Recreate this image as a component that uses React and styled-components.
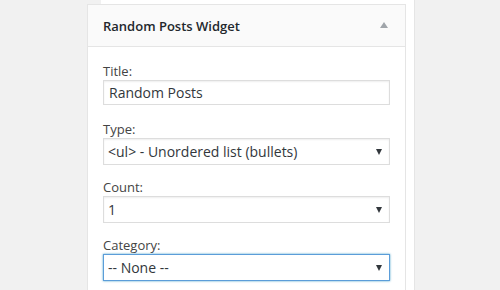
import styled, { createGlobalStyle } from "styled-components";

const GlobalStyle = createGlobalStyle`
  html, body {
    margin: 0;
    padding: 0;
    background: #f1f1f1;
    font-family: "Open Sans", "Liberation Sans", sans-serif;
    color: #444;
    overflow: hidden;
  }
`;

const fields = [
  { label: "Title:", kind: "input", value: "Random Posts" },
  { label: "Type:", kind: "select", value: "<ul> - Unordered list (bullets)" },
  { label: "Count:", kind: "select", value: "1" },
  { label: "Category:", kind: "select", value: "-- None --", focused: true },
];

function App() {
  return (
    <>
      <GlobalStyle />
      <StyledPage>
        <Sidebar>
          <Widget>
            <WidgetTop>
              <WidgetTitle>Random Posts Widget</WidgetTitle>
              <Toggle />
            </WidgetTop>
            <WidgetInside>
              {fields.map((f) => (
                <Field key={f.label} $spaced={f.kind === "input"}>
                  <Label>{f.label}</Label>
                  {f.kind === "input" ? (
                    <TextInput type="text" defaultValue={f.value} />
                  ) : (
                    <SelectWrap>
                      <Select defaultValue={f.value} $focused={f.focused}>
                        <option>{f.value}</option>
                      </Select>
                      <Arrow />
                    </SelectWrap>
                  )}
                </Field>
              ))}
            </WidgetInside>
          </Widget>
        </Sidebar>
      </StyledPage>
    </>
  );
}

const StyledPage = styled.div`
  height: 290px;
  width: 500px;
  display: flex;
  overflow: hidden;
`;

const Sidebar = styled.div`
  margin-left: 101px;
  width: 313px;
  height: 100%;
  background: #fff;
  border-right: 1px solid #e5e5e5;
  padding-top: 4px;
`;

const Widget = styled.div`
  margin-left: -14px;
  width: 319px;
  box-sizing: border-box;
  border: 1px solid #e5e5e5;
  border-bottom: none;
  background: #fff;
  height: 300px;
`;

const WidgetTop = styled.div`
  height: 41px;
  background: #fafafa;
  border-bottom: 1px solid #e5e5e5;
  display: flex;
  align-items: center;
  justify-content: space-between;
  padding: 0 17px 0 15px;
`;

const WidgetTitle = styled.h3`
  margin: 0;
  font-size: 13px;
  font-weight: 600;
  color: #23282d;
`;

const Toggle = styled.span`
  width: 0;
  height: 0;
  margin-top: -2px;
  border-left: 4px solid transparent;
  border-right: 4px solid transparent;
  border-bottom: 6px solid #a0a5aa;
`;

const WidgetInside = styled.div`
  padding: 15px 15px 0;
  display: flex;
  flex-direction: column;
  gap: 13px;
`;

const Field = styled.p`
  margin: 0;
  padding-bottom: ${(p) => (p.$spaced ? "2px" : "0")};
  display: flex;
  flex-direction: column;
`;

const Label = styled.label`
  font-size: 13px;
  line-height: 18px;
  color: #444;
`;

const TextInput = styled.input`
  box-sizing: border-box;
  width: 100%;
  height: 25px;
  margin: 0;
  padding: 2px 5px;
  font-family: inherit;
  font-size: 14px;
  color: #32373c;
  border: 1px solid #ddd;
  box-shadow: inset 0 1px 2px rgba(0, 0, 0, 0.07);
  outline: none;
`;

const SelectWrap = styled.div`
  position: relative;
`;

const Select = styled.select`
  box-sizing: border-box;
  width: 100%;
  height: 27px;
  margin: 0;
  padding: 2px 24px 2px 4px;
  font-family: inherit;
  font-size: 14px;
  color: #32373c;
  background: #fff;
  appearance: none;
  border: 1px solid ${(p) => (p.$focused ? "#5b9dd9" : "#ddd")};
  box-shadow: ${(p) =>
    p.$focused
      ? "0 0 2px rgba(30, 140, 190, 0.8)"
      : "inset 0 1px 2px rgba(0, 0, 0, 0.07)"};
  outline: none;
  border-radius: 0;
`;

const Arrow = styled.span`
  position: absolute;
  right: 8px;
  top: 11px;
  width: 0;
  height: 0;
  border-left: 3.5px solid transparent;
  border-right: 3.5px solid transparent;
  border-top: 6px solid #32373c;
  pointer-events: none;
`;

export default App;
